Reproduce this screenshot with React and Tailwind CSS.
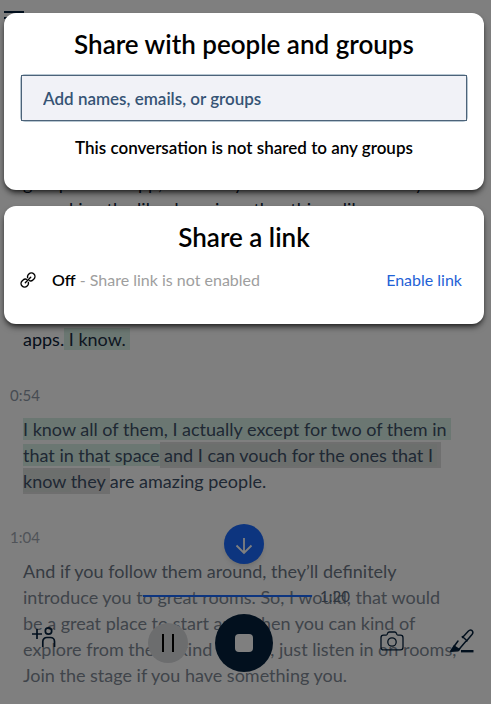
const MenuIcon = () => (
  <svg viewBox="0 0 20 14" className="h-[14px] w-5" fill="none" stroke="#04203c" strokeWidth="2">
    <path d="M0 1h20M0 7h20M0 13h20" />
  </svg>
);

const ArrowDownIcon = () => (
  <svg viewBox="0 0 20 20" className="mt-1 size-5" fill="none" stroke="#fff" strokeWidth="1.800">
    <path d="M10 2v15M2.500 9.500L10 17l7.500-7.500" />
  </svg>
);

const AddPersonIcon = () => (
  <svg viewBox="0 0 24 24" className="size-6" fill="none" stroke="#04203c" strokeWidth="1.700">
    <path d="M0 9h10M5 4v10" />
    <circle cx="16.500" cy="6" r="3.200" />
    <path d="M10.800 22v-5.500a4 4 0 0 1 4-4h3.700a4 4 0 0 1 4 4V22" />
  </svg>
);

const PauseIcon = () => (
  <svg viewBox="0 0 12 18" className="h-[18px] w-3" fill="none" stroke="#000" strokeWidth="2">
    <path d="M1 0v18M11 0v18" />
  </svg>
);

const CameraIcon = () => (
  <svg viewBox="0 0 24 20" className="h-5 w-6" fill="none" stroke="#04203c" strokeWidth="1.300" strokeLinejoin="round">
    <path d="M3.500 4.200h2.200c.8 0 1.200-.4 1.500-1l.4-.9c.3-.9.900-1.300 1.800-1.300h5.200c.9 0 1.500.4 1.800 1.300l.4.9c.3.6.7 1 1.500 1h2.200c1.500 0 2.500 1 2.500 2.500v9.600c0 1.600-1 2.600-2.500 2.600h-17c-1.500 0-2.500-1-2.500-2.600V6.700c0-1.500 1-2.500 2.500-2.500z" />
    <circle cx="12" cy="11" r="4.200" />
  </svg>
);

const PenIcon = () => (
  <svg viewBox="0 0 24 24" className="size-6" fill="none" stroke="#04203c" strokeWidth="1.500" strokeLinecap="round" strokeLinejoin="round">
    <path d="M12.500 8.500l5.700-6.200c1.200-1.300 2.800-1.500 3.900-.6 1 1 .9 2.500-.1 3.800l-5.500 6.600" />
    <path d="M12.300 7.500l4.700 4.200M15.700 12.500l-6.200 7.300M8 12l-3.800 5.200" />
    <path d="M4.500 16.500l-3.800 5.700 7.300-.4c1-.4 1.400-1.200 1.600-2" fill="#04203c" />
    <path d="M11 22.200h12.500" strokeWidth="2.400" strokeLinecap="butt" />
  </svg>
);

const LinkIcon = () => (
  <svg viewBox="0 0 16 16" className="size-4" fill="none" stroke="#000" strokeWidth="1.400" strokeLinecap="round">
    <path d="M7.600 5.600a3.400 3.400 0 0 1 .5-2.700l.8-.9a3.500 3.500 0 0 1 5 5l-1 .9a3.500 3.500 0 0 1-3.600.8" />
    <path d="M8.400 10.400a3.400 3.400 0 0 1-.5 2.700l-.8.900a3.500 3.500 0 0 1-5-5l1-.9a3.500 3.500 0 0 1 3.600-.8" />
    <path d="M5.300 10.700l5.400-5.400" />
  </svg>
);

const Transcript = () => (
  <main className="mt-[143px] text-lg leading-[26px] whitespace-nowrap text-[#0c2138]">
    <section className="pl-[23px]">
      <p>group on the app, and I may know a fair bit of it my</p>
      <p>are asking the like dropping other things like</p>
      <p className="pt-[104px]">
        apps.
        <mark className="bg-[#d6efe4] pr-1 text-[#1c2f45]"> I know. </mark>
      </p>
    </section>

    <section className="pt-[31px] pl-[23px]">
      <time className="-ml-[13px] block text-[15px] leading-6 text-[#8e98a6]">0:54</time>
      <p className="pt-[9px] text-[#3f5168]">
        <mark className="bg-[#d6efe4] pr-1 text-inherit">I know all of them, I actually except for two of them in</mark>
        <br />
        <mark className="bg-[#d6efe4] text-inherit">that in that space</mark>
        <mark className="bg-[#dedede] py-[2px] pr-1 text-inherit">
          <mark className="bg-[#d8dedb] pr-1 text-inherit"> and I can vouch for the ones that I</mark>
        </mark>
        <br />
        <mark className="bg-[#dedede] py-[2px] text-inherit">
          <mark className="bg-[#d8dedb] text-inherit">know </mark>
          they{' '}
        </mark>
        are amazing people.
      </p>
    </section>

    <section className="pt-[31px] pl-[23px]">
      <time className="-ml-[13px] block text-[15px] leading-6 text-[#a0a7b1]">1:04</time>
      <div className="pt-[9px] text-[#808995]">
        <p className="text-[#6c7785]">And if you follow them around, they’ll definitely</p>
        <p>introduce you to great rooms. So, I would, that would</p>
        <p>be a great place to start and when you can kind of</p>
        <p>explore from there, kind of idea, just listen in on rooms,</p>
        <p>Join the stage if you have something you.</p>
      </div>
    </section>
  </main>
);

const RecorderBar = () => (
  <footer className="absolute inset-x-0 bottom-8 pr-1 text-[#5c6b7d]">
    <button
      type="button"
      aria-label="Jump to latest"
      className="mx-auto flex size-10 items-center justify-center rounded-full bg-[#1a6aff] shadow-md"
    >
      <ArrowDownIcon />
    </button>

    <div className="mt-5 flex items-center">
      <div className="ml-[143px] h-[2px] w-[169px] bg-[#1a6aff]" />
      <span className="ml-2 text-[15px] leading-6">1:20</span>
    </div>

    <div className="mt-[6px] grid grid-cols-[1fr_auto_1fr] items-center">
      <div className="flex items-center justify-between pr-[27px] pl-8">
        <button type="button" aria-label="Add people" className="-mt-3">
          <AddPersonIcon />
        </button>
        <button
          type="button"
          aria-label="Pause"
          className="flex size-10 items-center justify-center rounded-full bg-[#d9dadd]"
        >
          <PauseIcon />
        </button>
      </div>
      <button
        type="button"
        aria-label="Stop recording"
        className="flex size-[58px] items-center justify-center rounded-full bg-[#04203c]"
      >
        <span className="size-[18px] rounded-sm bg-white" />
      </button>
      <div className="-mt-1 flex items-center justify-end gap-[46px] pr-[13px]">
        <button type="button" aria-label="Take photo">
          <CameraIcon />
        </button>
        <button type="button" aria-label="Highlight">
          <PenIcon />
        </button>
      </div>
    </div>
  </footer>
);

const ShareDialog = () => (
  <div
    role="dialog"
    aria-label="Share conversation"
    className="absolute inset-0 flex flex-col gap-4 bg-black/50 pt-[13px] pr-[7px] pl-1"
  >
    <section className="rounded-xl bg-white px-[17px] pt-4 pb-[30px] text-center text-black shadow-md shadow-black/60">
      <h2 className="text-[26px] leading-[30px] font-semibold">Share with people and groups</h2>
      <div className="mt-4 rounded-sm ring-1 ring-[#b7c6d1]">
        <input
          type="text"
          aria-label="Add names, emails, or groups"
          placeholder="Add names, emails, or groups"
          className="block h-[46px] w-full border border-[#4c6379] bg-[#f1f2f7] px-[21px] text-[17px] font-semibold outline-none placeholder:text-[#365475]"
        />
      </div>
      <p className="mt-[15px] text-[17px] leading-6 font-semibold">This conversation is not shared to any groups</p>
    </section>

    <section className="rounded-xl bg-white px-4 pt-4 pb-8 text-black shadow-md shadow-black/60">
      <h2 className="text-center text-[26px] leading-[30px] font-semibold">Share a link</h2>
      <div className="mt-4 flex items-center text-base leading-6">
        <LinkIcon />
        <p className="ml-4 text-[#9e9e9e]">
          <strong className="font-semibold text-black">Off</strong> - Share link is not enabled
        </p>
        <button type="button" className="mr-[6px] ml-auto text-[#1f62d6]">
          Enable link
        </button>
      </div>
    </section>
  </div>
);

export default function App() {
  return (
    <div className="relative h-screen overflow-hidden bg-white font-['Lato',sans-serif]">
      <header className="h-[27px] pt-[11px] pl-1">
        <button type="button" aria-label="Menu" className="block">
          <MenuIcon />
        </button>
      </header>
      <Transcript />
      <RecorderBar />
      <ShareDialog />
    </div>
  );
}
